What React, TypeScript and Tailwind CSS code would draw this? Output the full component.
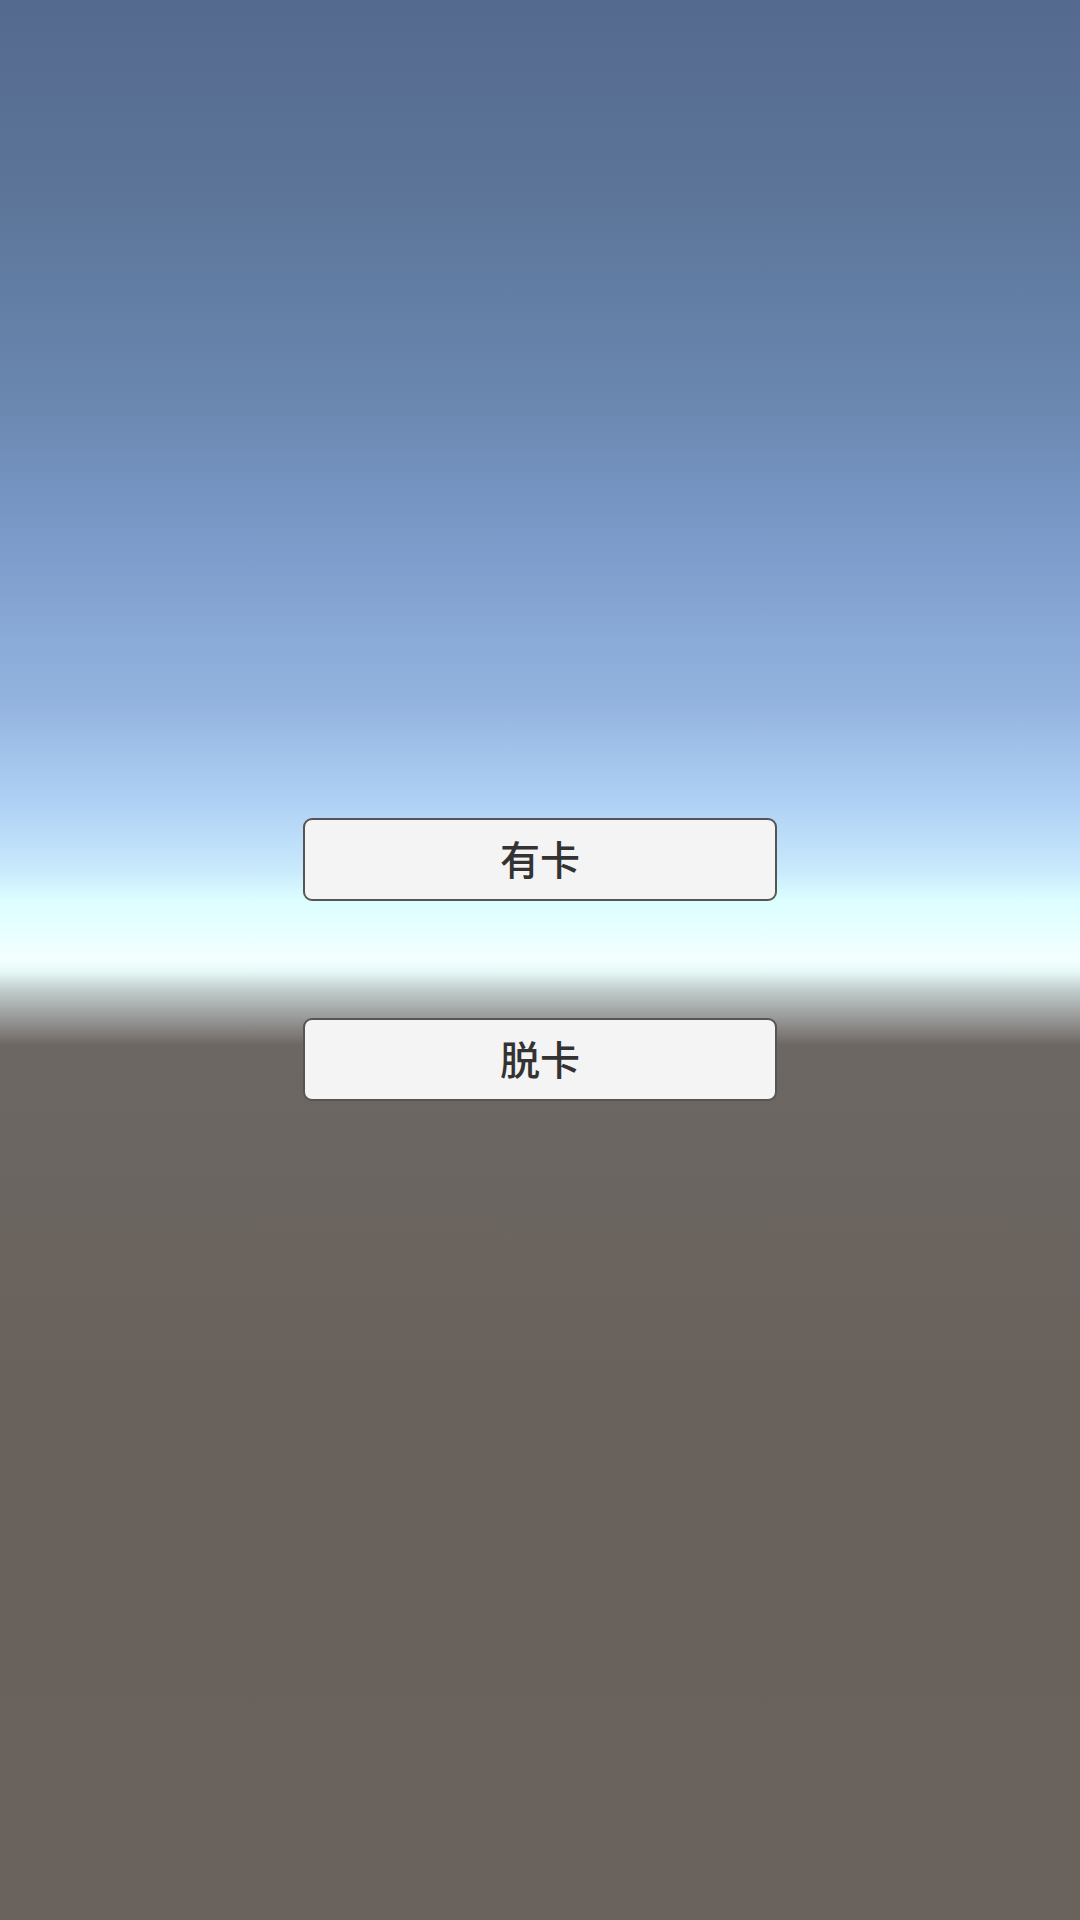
export default function App() {
  const buttons = ["有卡", "脱卡"];
  return (
    <div className="flex h-[1920px] w-full flex-col items-center gap-[117px] bg-[linear-gradient(to_bottom,#556a8f_0px,#5c7599_200px,#6a87b0_400px,#7d9ccb_550px,#93b3df_700px,#aed0f4_800px,#c9e9fc_870px,#dcfeff_900px,#f3fffe_960px,#e6f8f8_972px,#c0cdcc_990px,#9d9f9e_1015px,#6d6763_1045px,#68615c_1400px,#6a625d_1920px)] pt-[818px]">
      {buttons.map((label) => (
        <button
          key={label}
          className="flex h-[83px] w-[474px] items-center justify-center rounded-[9px] border-2 border-[#555555] bg-[#f4f4f4] pb-[4px] font-['Noto_Sans_CJK_SC',sans-serif] text-[40px] font-medium text-[#333333]"
        >
          {label}
        </button>
      ))}
    </div>
  );
}
